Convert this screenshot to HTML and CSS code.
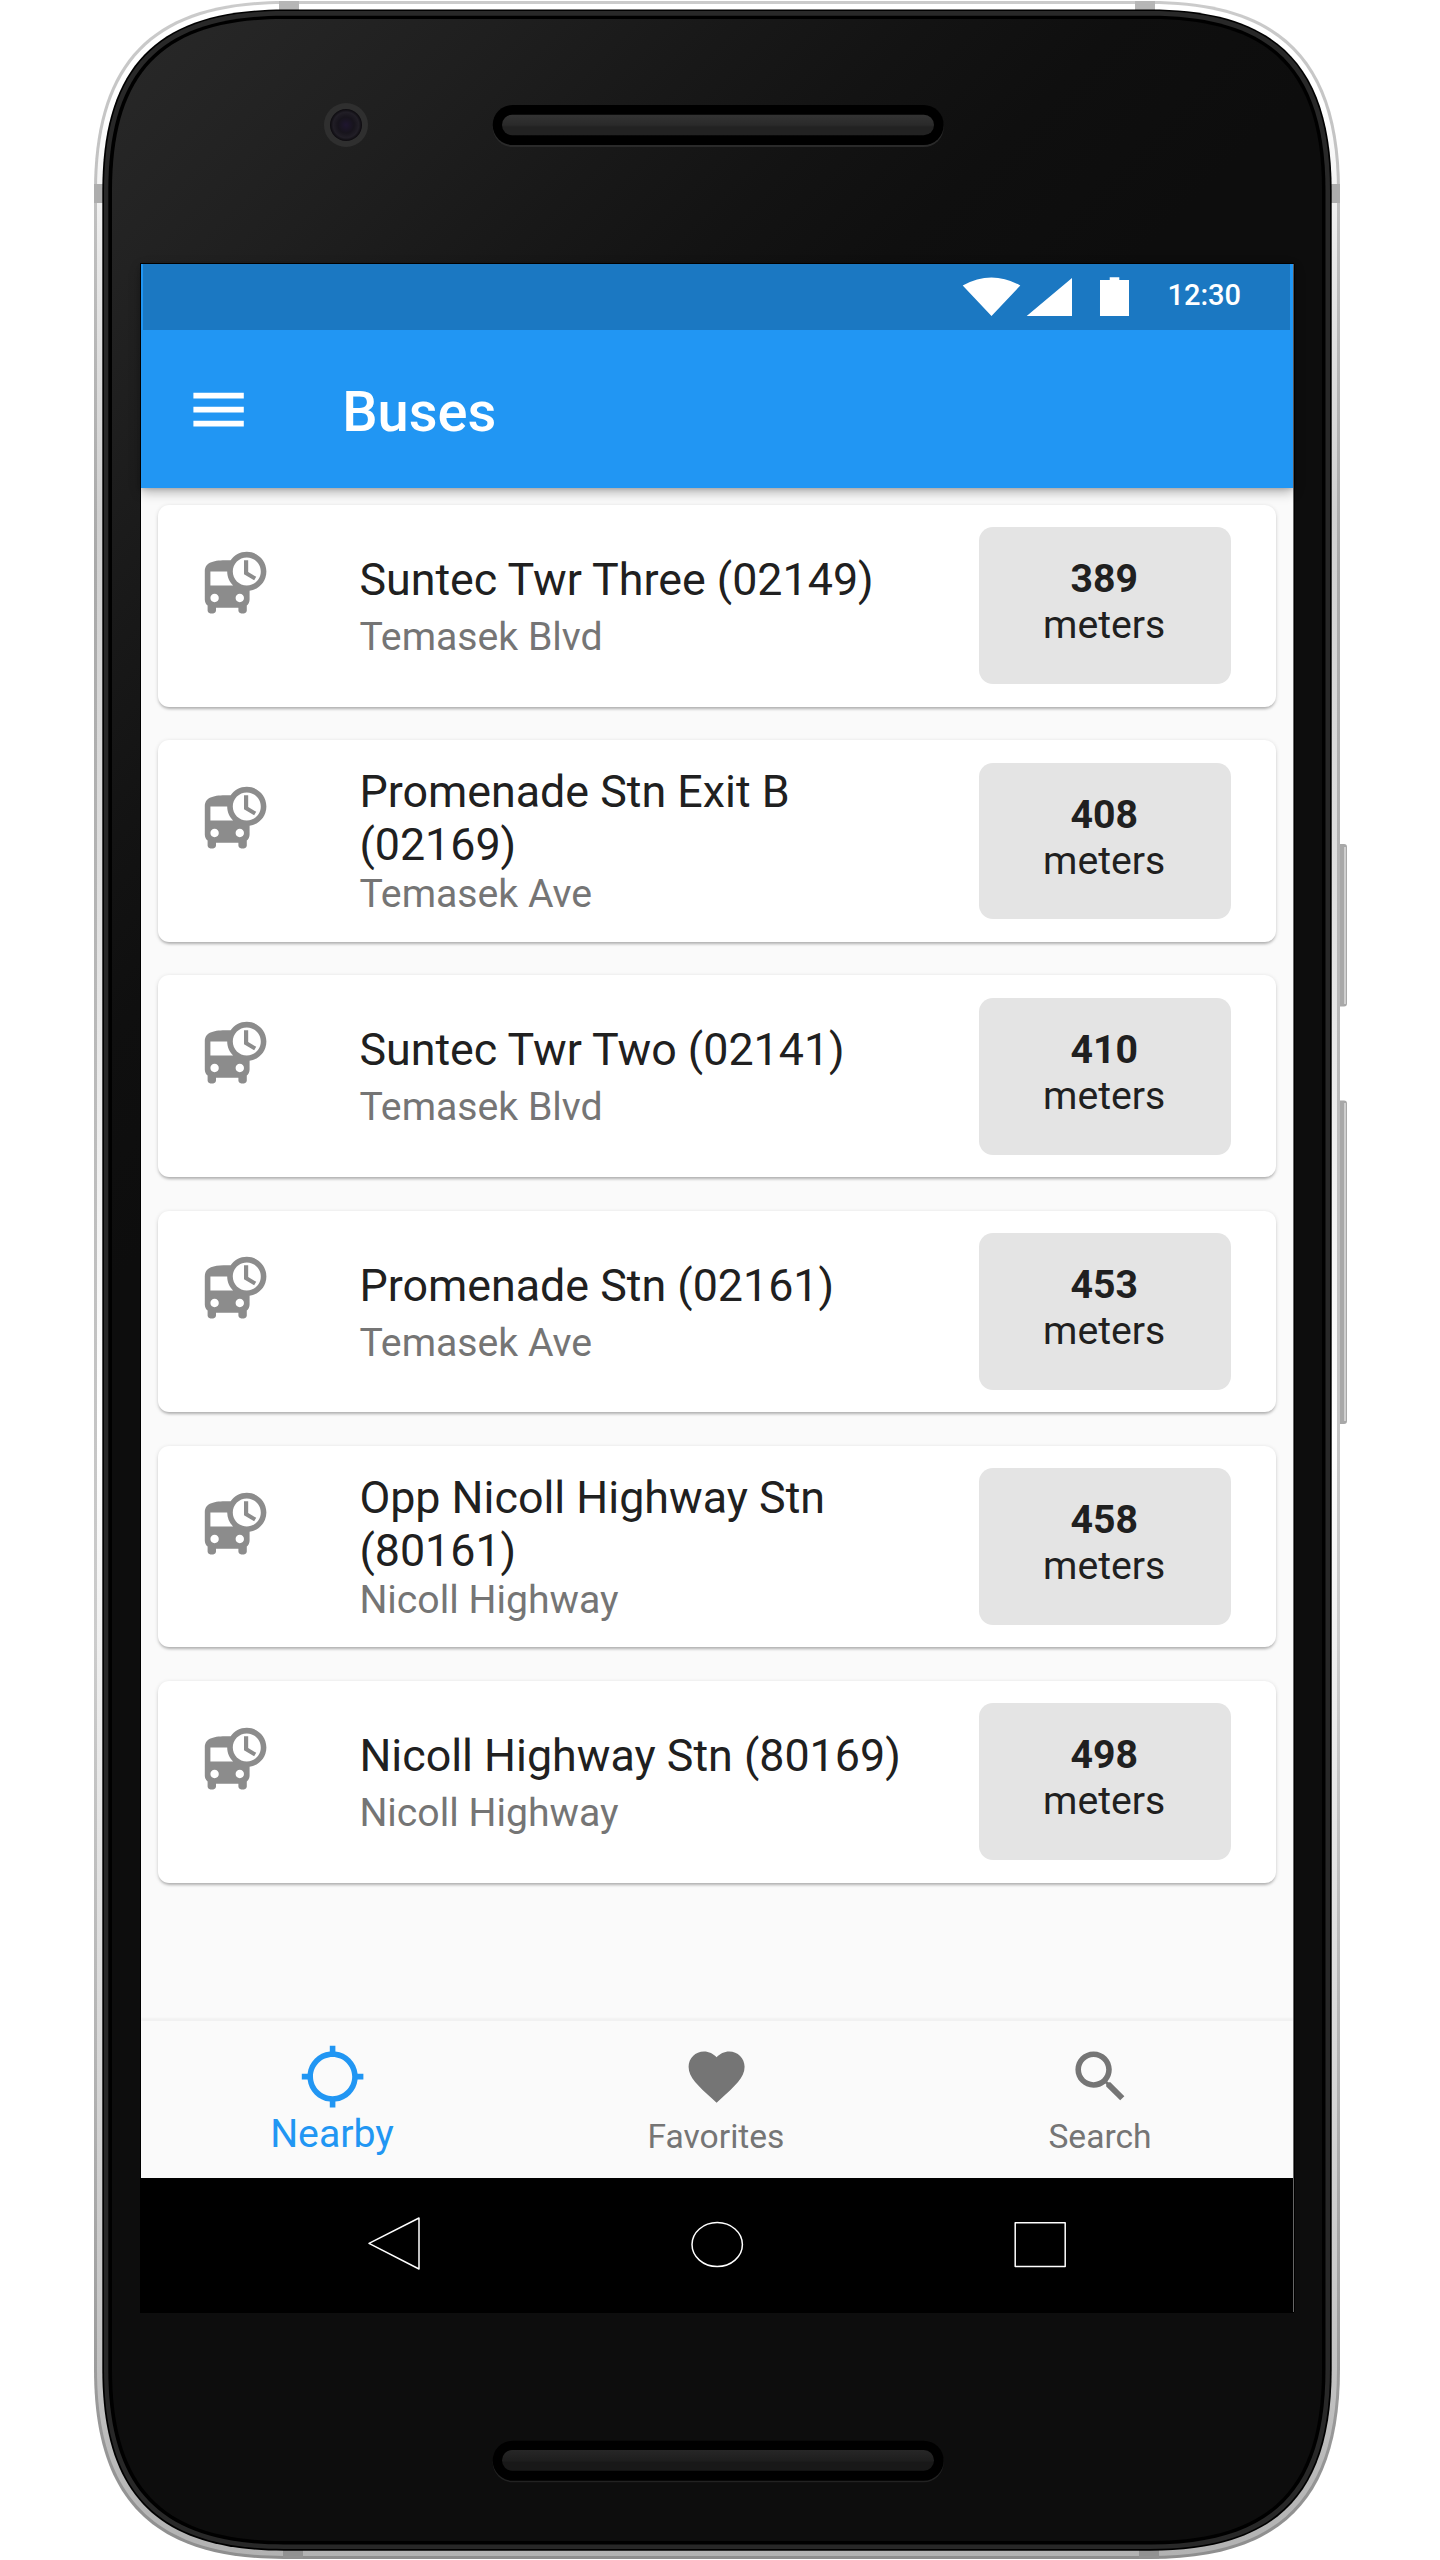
FILE: index.html
```html
<!DOCTYPE html>
<html lang="en">
<head>
<meta charset="utf-8">
<title>Buses</title>
<link rel="stylesheet" href="styles.css">
</head>
<body>
<svg class="defs" width="0" height="0">
  <symbol id="bus" viewBox="0 0 24 24"><path d="M16 1c-2.4 0-4.52 1.21-5.78 3.05.01-.01.01-.02.02-.03C9.84 4 9.42 4 9 4c-4.42 0-8 .5-8 4v10c0 .88.39 1.67 1 2.22V22c0 .55.45 1 1 1h1c.55 0 1-.45 1-1v-1h8v1c0 .55.45 1 1 1h1c.55 0 1-.45 1-1v-1.78c.61-.55 1-1.34 1-2.22v-3.08c3.39-.49 6-3.39 6-6.92 0-3.87-3.13-7-7-7zM4.5 19c-.83 0-1.5-.67-1.5-1.5S3.67 16 4.5 16s1.5.67 1.5 1.5S5.33 19 4.5 19zM3 13V8h6c0 1.96.81 3.73 2.11 5H3zm10.5 6c-.83 0-1.5-.67-1.5-1.5s.67-1.5 1.5-1.5 1.5.67 1.5 1.5-.67 1.5-1.5 1.5zm2.5-6c-2.76 0-5-2.24-5-5s2.24-5 5-5 5 2.24 5 5-2.24 5-5 5zm.5-9H15v5l3.62 2.16.75-1.23-2.87-1.68V4z"/></symbol>
</svg>
<div class="device">
  <svg class="shell" width="1440" height="2560" viewBox="0 0 1440 2560">
    <defs>
      <linearGradient id="edge" x1="0" y1="0" x2="0" y2="1">
        <stop offset="0" stop-color="#cbcbcb"/><stop offset=".08" stop-color="#c0c0c0"/><stop offset=".22" stop-color="#a9a9a9"/><stop offset=".4" stop-color="#b8b8b8"/><stop offset=".64" stop-color="#cccccc"/><stop offset=".8" stop-color="#b4b4b4"/><stop offset="1" stop-color="#8e8e8e"/>
      </linearGradient>
      <linearGradient id="silver" x1="0" y1="0" x2="0" y2="1">
        <stop offset="0" stop-color="#ffffff"/><stop offset=".04" stop-color="#ffffff"/><stop offset=".1" stop-color="#e8e8e8"/><stop offset=".2" stop-color="#d0d0d0"/><stop offset=".34" stop-color="#dedede"/><stop offset=".56" stop-color="#ffffff"/><stop offset=".64" stop-color="#f0f0f0"/><stop offset=".8" stop-color="#d8d8d8"/><stop offset=".9" stop-color="#c8c8c8"/><stop offset="1" stop-color="#b2b2b2"/>
      </linearGradient>
      <linearGradient id="face" gradientUnits="userSpaceOnUse" x1="60" y1="60" x2="700" y2="700">
        <stop offset="0" stop-color="#292929"/><stop offset=".31" stop-color="#1f1f1f"/><stop offset=".5" stop-color="#181818"/><stop offset=".65" stop-color="#131313"/><stop offset=".8" stop-color="#0f0f0f"/><stop offset="1" stop-color="#0d0d0d"/>
      </linearGradient>
      <linearGradient id="bar1" x1="0" y1="0" x2="0" y2="1"><stop offset="0" stop-color="#333"/><stop offset=".5" stop-color="#2a2a2a"/><stop offset=".6" stop-color="#222"/><stop offset="1" stop-color="#222"/></linearGradient>
      <linearGradient id="bar2" x1="0" y1="0" x2="0" y2="1"><stop offset="0" stop-color="#272727"/><stop offset=".5" stop-color="#1e1e1e"/><stop offset=".6" stop-color="#181818"/><stop offset="1" stop-color="#181818"/></linearGradient>
      <radialGradient id="lens"><stop offset="0" stop-color="#1f1630"/><stop offset=".5" stop-color="#17141c"/><stop offset=".8" stop-color="#211e26"/><stop offset="1" stop-color="#0c0a0e"/></radialGradient>
    </defs>
    <rect x="1335" y="844" width="12" height="162.500" rx="3" fill="#a8a8a8"/>
    <rect x="1344" y="847" width="2" height="157" fill="#cfcfcf"/>
    <rect x="1335" y="1100.500" width="12" height="323.500" rx="3" fill="#a8a8a8"/>
    <rect x="1344" y="1103" width="2" height="318" fill="#cfcfcf"/>
    <path fill="url(#edge)" d="M94 191C94 60 153 1 284 1H1150C1281 1 1340 60 1340 191V2369C1340 2500 1281 2559 1150 2559H284C153 2559 94 2500 94 2369Z"/>
    <path fill="url(#silver)" d="M97 191C97 62 155 4 284 4H1150C1279 4 1337 62 1337 191V2369C1337 2498 1279 2556 1150 2556H284C155 2556 97 2498 97 2369Z"/>
    <g fill="#b6b6b6"><path d="M279 1h20v9h-20zM1135 1h20v9h-20z"/></g>
    <g fill="#adadad"><path d="M94 184h9v19h-9zM1331 184h9v19h-9z"/></g>
    <g fill="#929292"><path d="M283 2550h20v8.500h-20zM1139 2550h20v8.500h-20z"/></g>
    <path d="M102.300 191C102.300 65 158 9.500 284 9.500H1150C1276 9.500 1331.700 65 1331.700 191V2369C1331.700 2495 1276 2550.700 1150 2550.700H284C158 2550.700 102.300 2495 102.300 2369Z"/>
    <path fill="#282828" d="M104 191C104 66 159 11 284 11H1150C1275 11 1330 66 1330 191V2369C1330 2494 1275 2549 1150 2549H284C159 2549 104 2494 104 2369Z"/>
    <path d="M108.300 191C108.300 69 162 15.700 284 15.700H1150C1272 15.700 1325.500 69 1325.500 191V2369C1325.500 2491 1272 2544.500 1150 2544.500H284C162 2544.500 108.300 2491 108.300 2369Z"/>
    <path fill="url(#face)" d="M112 191C112 71 164 19 284 19H1150C1270 19 1322 71 1322 191V2369C1322 2489 1270 2541 1150 2541H284C164 2541 112 2489 112 2369Z"/>
    <circle cx="346" cy="125" r="22" fill="#2f2f2f"/><circle cx="346" cy="125" r="16" fill="url(#lens)"/>
    <rect x="492.700" y="107" width="451" height="40" rx="20" fill="#2a2a2a"/>
    <rect x="492.700" y="105" width="451" height="40" rx="20"/>
    <rect x="502" y="114.700" width="432" height="20.500" rx="10.200" fill="url(#bar1)"/>
    <rect x="492.700" y="2442.300" width="451" height="40" rx="20" fill="#222"/>
    <rect x="492.700" y="2440.700" width="451" height="40" rx="20"/>
    <rect x="502" y="2450" width="432" height="20.700" rx="10.300" fill="url(#bar2)"/>
  </svg>
  <div class="screen">
    <header class="top">
      <div class="status">
        <svg width="168" height="40" viewBox="962 277 168 40" fill="#fff">
          <path d="M962.700 285.500Q991.500 269.500 1020.300 285.500L991.500 316ZM1026.700 316L1072 278V316ZM1100 280h9.700v-2.700h9.600v2.700h9.700v36h-29z"/>
        </svg>
        <span class="time">12:30</span>
      </div>
      <div class="appbar">
        <svg class="icon" viewBox="0 0 24 24" fill="#fff"><path d="M3 18h18v-2H3v2zm0-5h18v-2H3v2zm0-7v2h18V6H3z"/></svg>
        <h1>Buses</h1>
      </div>
    </header>
    <main class="list">
      <article class="card"><svg class="icon"><use href="#bus"/></svg><div class="stop"><h2>Suntec Twr Three (02149)</h2><p>Temasek Blvd</p></div><div class="distance"><b>389</b><span>meters</span></div></article>
      <article class="card"><svg class="icon"><use href="#bus"/></svg><div class="stop long"><h2>Promenade Stn Exit B (02169)</h2><p>Temasek Ave</p></div><div class="distance"><b>408</b><span>meters</span></div></article>
      <article class="card"><svg class="icon"><use href="#bus"/></svg><div class="stop"><h2>Suntec Twr Two (02141)</h2><p>Temasek Blvd</p></div><div class="distance"><b>410</b><span>meters</span></div></article>
      <article class="card"><svg class="icon"><use href="#bus"/></svg><div class="stop"><h2>Promenade Stn (02161)</h2><p>Temasek Ave</p></div><div class="distance"><b>453</b><span>meters</span></div></article>
      <article class="card"><svg class="icon"><use href="#bus"/></svg><div class="stop long"><h2>Opp Nicoll Highway Stn (80161)</h2><p>Nicoll Highway</p></div><div class="distance"><b>458</b><span>meters</span></div></article>
      <article class="card"><svg class="icon"><use href="#bus"/></svg><div class="stop"><h2>Nicoll Highway Stn (80169)</h2><p>Nicoll Highway</p></div><div class="distance"><b>498</b><span>meters</span></div></article>
    </main>
    <nav class="tabs">
      <a class="tab active"><svg class="icon" viewBox="0 0 24 24"><path d="M20.940 11c-.46-4.170-3.770-7.480-7.940-7.940V1h-2v2.060C6.830 3.520 3.520 6.830 3.060 11H1v2h2.060c.46 4.170 3.770 7.480 7.940 7.940V23h2v-2.060c4.170-.46 7.480-3.770 7.940-7.940H23v-2h-2.060zM12 19c-3.870 0-7-3.130-7-7s3.130-7 7-7 7 3.130 7 7-3.130 7-7 7z"/></svg><span>Nearby</span></a>
      <a class="tab"><svg class="icon" viewBox="0 0 24 24"><path d="M12 21.350l-1.450-1.320C5.400 15.360 2 12.280 2 8.500 2 5.420 4.420 3 7.500 3c1.740 0 3.410.81 4.500 2.090C13.090 3.810 14.760 3 16.500 3 19.580 3 22 5.420 22 8.500c0 3.780-3.400 6.860-8.550 11.540L12 21.350z"/></svg><span>Favorites</span></a>
      <a class="tab"><svg class="icon" viewBox="0 0 24 24"><path d="M15.500 14h-.79l-.28-.27C15.410 12.590 16 11.110 16 9.500 16 5.910 13.090 3 9.500 3S3 5.910 3 9.500 5.910 16 9.500 16c1.610 0 3.090-.59 4.230-1.570l.27.28v.79l5 4.990L20.490 19l-4.990-5zm-6 0C7.010 14 5 11.990 5 9.500S7.010 5 9.500 5 14 7.010 14 9.500 11.990 14 9.500 14z"/></svg><span>Search</span></a>
    </nav>
    <div class="keys">
      <svg width="700" height="56" viewBox="367 2216 700 56" fill="none" stroke="#fff" stroke-width="1.500" stroke-linejoin="round">
        <path d="M369 2243.300L419 2218V2269Z"/><ellipse cx="717.200" cy="2244.600" rx="25.200" ry="22"/><rect x="1015.200" y="2222.800" width="50" height="43.800"/>
      </svg>
    </div>
  </div>
</div>
</body>
</html>
```
FILE: styles.css
```css
* { box-sizing: border-box; }
body, h1, h2, p { margin: 0; }
body { background: #fff; font-family: Roboto, "Liberation Sans", sans-serif; }
.defs { position: absolute; }
.device { position: relative; width: 1440px; height: 2560px; padding: 264px 146px 0 141px; overflow: hidden; }
.shell { position: absolute; inset: 0; }
.screen {
  position: relative; display: flex; flex-direction: column;
  width: 1152px; height: 2048px; background: #fafafa;
  box-shadow: 1px 0 0 #666, 0 0 0 1px #000, 2px 0 0 #000;
}
.icon { flex: none; width: 67.2px; height: 67.2px; }
.top { position: relative; z-index: 1; height: 223.800px; background: #2196f3; box-shadow: 0 4px 11px rgba(0,0,0,.3), 0 1px 4px rgba(0,0,0,.14); }
.status { display: flex; align-items: flex-start; justify-content: flex-end; height: 66px; margin: 0 3px 0 2px; padding: 13px 49px 0 0; background: #1b78c2; }
.time { margin-left: 37px; padding-top: 1px; color: #fff; font-size: 29px; font-weight: 500; line-height: 34px; }
.appbar { display: flex; align-items: center; height: 158px; padding-left: 44px; }
.appbar .icon { margin-top: 1px; }
.appbar h1 { margin-left: 90px; padding-top: 5px; color: #fff; font-size: 56px; font-weight: 500; line-height: 66px; }
.list { display: flex; flex-direction: column; flex: 1; gap: 33.600px; padding: 17.300px 16.800px 0; }
.card { display: flex; align-items: flex-start; height: 201.600px; padding: 0 45px 0 44px; border-radius: 11.200px; background: #fff; box-shadow: 0 2.800px 2.800px -1px rgba(0,0,0,.22), 0 1px 4px rgba(0,0,0,.14); }
.card .icon { margin-top: 43.800px; fill: #8c8c8c; }
.stop { flex: 1; margin-left: 90.400px; padding: 48px 44.800px 0 0; }
.stop h2 { color: #202020; font-size: 44.800px; font-weight: 400; line-height: 53px; }
.stop p { margin-top: 8px; color: #757575; font-size: 39.200px; line-height: 46px; }
.stop.long { padding-top: 25px; }
.stop.long p { margin-top: 0; }
.distance { display: flex; flex-direction: column; width: 252px; height: 156.800px; margin-top: 22.400px; padding: 29px 2px 0 0; border-radius: 14px; background: #e4e4e4; color: #202020; font-size: 39.200px; line-height: 46px; text-align: center; }
.tabs { position: relative; display: flex; height: 156.800px; background: #fafafa; box-shadow: 0 -3px 2px rgba(0,0,0,.035); }
.tab { display: flex; flex: 1; flex-direction: column; align-items: center; padding-top: 22.400px; color: #757575; fill: #757575; font-size: 33.600px; line-height: 40px; }
.tab span { margin-top: 7px; padding-right: 2px; }
.tab.active { color: #2196f3; fill: #2196f3; font-size: 39.200px; line-height: 46px; }
.tab.active span { margin-top: 1px; }
.keys { display: flex; justify-content: center; height: 134.400px; padding-top: 38.500px; background: #000; }
```
